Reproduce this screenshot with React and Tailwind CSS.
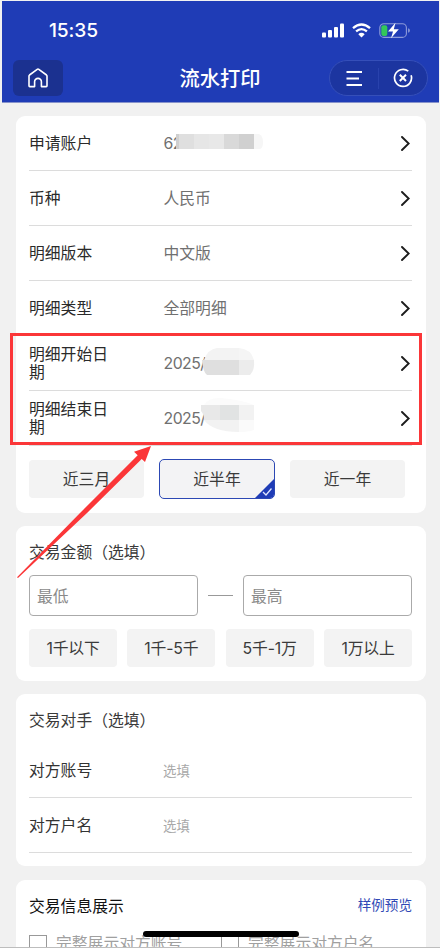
const ROWS = [
  { label: '申请账户', value: '62', mask: 'account' },
  { label: '币种', value: '人民币' },
  { label: '明细版本', value: '中文版' },
  { label: '明细类型', value: '全部明细' },
  { label: '明细开始日期', value: '2025/', mask: 'start' },
  { label: '明细结束日期', value: '2025/', mask: 'end' },
];

const PERIODS = ['近三月', '近半年', '近一年'];
const AMOUNTS = ['1千以下', '1千-5千', '5千-1万', '1万以上'];

// Mosaic blocks that hide the private part of a value
function Mask({ type }) {
  if (type === 'account') {
    return (
      <svg className="absolute left-[13px] top-[-2px]" width="88" height="18" viewBox="0 0 88 18">
        <rect x="0" y="1" width="3" height="15" fill="#cfcfcf" />
        <rect x="3" y="1" width="15" height="15" fill="#dfdfdf" />
        <rect x="18" y="1" width="15" height="15" fill="#e6e6e6" />
        <rect x="33" y="1" width="15" height="15" fill="#e8e8e8" />
        <rect x="48" y="1" width="15" height="15" fill="#d9d9d9" />
        <rect x="63" y="1" width="15" height="15" fill="#d0d0d0" />
        <path d="M78 1h5q4 2 4 8t-3 7h-6z" fill="#f6f6f6" />
      </svg>
    );
  }
  if (type === 'start') {
    return (
      <svg className="absolute left-[39px] top-[-7px]" width="53" height="28" viewBox="0 0 53 28">
        <path d="M2 12Q6 1 15 0H37V12z" fill="#f3f3f3" />
        <path d="M37 0Q49 1 52 12H37z" fill="#f5f5f5" />
        <path d="M0 12H37V27H5Q1 24 0 12z" fill="#dfdfdf" />
        <path d="M37 12H52Q53 22 48 27H37z" fill="#ececec" />
      </svg>
    );
  }
  return (
    <svg className="absolute left-[38px] top-[-13px]" width="54" height="36" viewBox="0 0 54 36">
      <path d="M3 8Q8 0 20 1Q42 3 53 8z" fill="#fbfbfb" />
      <path d="M0 8H19V23H3Q3 17 0 14z" fill="#e8e8e8" />
      <rect x="19" y="8" width="19" height="15" fill="#e1e3e3" />
      <rect x="38" y="8" width="15" height="15" fill="#f2f2f2" />
      <path d="M3 23H38V35Q12 35 3 23z" fill="#f2f2f2" />
      <path d="M38 23H53V33Q47 35 38 35z" fill="#fafafa" />
    </svg>
  );
}

function Chevron() {
  return (
    <svg className="mr-[2px]" width="9" height="15" viewBox="0 0 9 15" fill="none" stroke="#1c1c1c" strokeWidth="1.9">
      <path d="M1 1l6.700 6.500L1 14" strokeLinecap="round" />
    </svg>
  );
}

function Card({ className, children }) {
  return <section className={`rounded-[9px] bg-white pl-[13px] pr-[14px] ${className}`}>{children}</section>;
}

function StatusBar() {
  return (
    <div className="flex h-[58px] items-center pl-[47px] pr-[28px]">
      <span className="pt-[1px] font-[Inter] text-[19.200px] font-medium tracking-[-0.100px]">15:35</span>
      <div className="ml-auto flex items-center">
        <svg width="23" height="15" viewBox="0 0 23 15" fill="#fff">
          <rect x="0" y="9.500" width="4" height="5" rx="1" />
          <rect x="6" y="7" width="4" height="7.500" rx="1" />
          <rect x="12" y="4" width="4" height="10.500" rx="1" />
          <rect x="18" y="0.500" width="4" height="14" rx="1" />
        </svg>
        <svg className="ml-[7px]" width="19" height="15" viewBox="0 0 19 15" fill="none" stroke="#fff" strokeWidth="2.300">
          <path d="M1 5.200Q9.500-2.200 18 5.200" />
          <path d="M4.100 8.400Q9.500 3.800 14.900 8.400" />
          <path d="M6.300 11.200Q9.500 8.400 12.700 11.200L9.500 14.500z" fill="#fff" stroke="none" />
        </svg>
        <svg className="ml-[8px]" width="32" height="17" viewBox="0 0 32 17">
          <rect x="0.800" y="1.800" width="26.600" height="13.600" rx="4" fill="none" stroke="#8e9bd9" strokeWidth="1.100" />
          <path d="M29 6.200q2 .5 2 2.300t-2 2.300z" fill="#8090d4" />
          <rect x="2.300" y="3.300" width="6" height="10.600" rx="2" fill="#33c759" />
          <path d="M16.500.8L9 9.400h5L12 16.200l7.800-9h-5z" fill="#fff" />
        </svg>
      </div>
    </div>
  );
}

function NavBar() {
  return (
    <div className="flex h-[43px] items-start justify-between px-[11px] pt-[1px]">
      <button className="flex h-9 w-[50px] items-center justify-center rounded-md bg-[#1b3190]">
        <svg width="20" height="20" viewBox="0 0 20 20" fill="none" stroke="#fff" strokeWidth="1.600" strokeLinejoin="round">
          <path d="M4 18.600H1.800q-.8 0-.8-.8V8q0-.6.5-1L9.200 1.300q.8-.6 1.600 0L18.500 7q.5.4.5 1v9.800q0 .8-.8.8H13.400V13.800a3.400 3.400 0 0 0-6.800 0V18.600z" />
        </svg>
      </button>
      <h1 className="ml-[48px] mt-[4px] text-[20.300px] font-medium leading-[30px]">流水打印</h1>
      <div className="flex h-9 w-[99px] items-center rounded-full border border-[#354fb9] bg-[#1c35a0]">
        <div className="flex w-[49px] justify-center border-r border-[#2942ad] py-[3px]">
          <svg width="16" height="15" viewBox="0 0 16 15" fill="none" stroke="#fff" strokeWidth="1.800">
            <path d="M0.500 1H16M0.500 7.500H13M0.500 14H16" />
          </svg>
        </div>
        <div className="flex flex-1 justify-center">
          <svg width="20" height="20" viewBox="0 0 20 20" fill="none" stroke="#fff" strokeWidth="1.700">
            <path d="M15.300 3.200A8.500 8.500 0 1 0 18.100 7.200" />
            <path d="M6.800 6.800l6.200 6.200M13 6.800L6.800 13" strokeWidth="2" />
          </svg>
        </div>
      </div>
    </div>
  );
}

function Row({ label, value, mask }) {
  return (
    <div className="flex h-[55px] items-center border-b border-[#dcdcdc]">
      <div className="w-[134px] shrink-0 pt-[1px]">
        <div className="w-[84px] text-[15.800px] leading-[17.500px] text-[#2a2a2a]">{label}</div>
      </div>
      <div className="relative mt-[2px] pl-[0.500px] text-[15.800px] leading-[18px] text-[#707070]">
        <span className={mask ? 'tracking-[-0.500px]' : ''}>{value}</span>
        {mask && <Mask type={mask} />}
      </div>
      <div className="ml-auto">
        <Chevron />
      </div>
    </div>
  );
}

function Party({ label }) {
  return (
    <div className="flex h-[55px] items-center border-b border-[#dcdcdc] pt-[2px]">
      <span className="w-[134px] text-[15.800px] text-[#333]">{label}</span>
      <span className="text-[13.400px] text-[#a8a8a8]">选填</span>
    </div>
  );
}

function Period({ text, active }) {
  if (!active) {
    return (
      <button className="h-[38px] w-[115px] rounded-[4px] bg-[#f3f3f3] pt-[2px] text-[15.800px] text-[#3a3a3a]">{text}</button>
    );
  }
  return (
    <button className="relative h-[40px] w-[116px] overflow-hidden rounded-[5px] border border-[#2c48b4] bg-[#f3f3f5] pt-[2px] text-[15.800px] text-[#3a3a3a]">
      {text}
      <svg className="absolute -bottom-px -right-px" width="21" height="21" viewBox="0 0 21 21">
        <path d="M21 0V21H0z" fill="#1f3cb6" />
        <path d="M9 14l3 3 5.500-6.500" fill="none" stroke="#dfe5ff" strokeWidth="1.300" />
      </svg>
    </button>
  );
}

function AmountBox({ text }) {
  return (
    <div className="flex h-[41px] w-[169px] items-center rounded-[4px] border border-[#aaa] pl-[7px] pt-[2px] text-[15.800px] text-[#8a8a8a]">
      {text}
    </div>
  );
}

export default function App() {
  return (
    <div className="relative h-[948px] w-[440px] overflow-hidden border-b border-[#bdbdbd] bg-[#f1f1f1] font-['Inter','Noto_Sans_CJK_SC',sans-serif]">
      <header className="ml-[2px] mr-px mt-px h-[102px] border-b border-[#8793cb] bg-[#1f3cb6] text-white">
        <StatusBar />
        <NavBar />
      </header>

      <main className="flex flex-col gap-[13px] pl-4 pr-[14px] pt-[13px]">
        <Card className="h-[397px]">
          {ROWS.map((s) => (
            <Row key={s.label} {...s} />
          ))}
          <div className="mt-[13px] flex items-center justify-between pr-[7px]">
            {PERIODS.map((p) => (
              <Period key={p} text={p} active={p === '近半年'} />
            ))}
          </div>
        </Card>

        <Card className="h-[155px] pt-[15px]">
          <h2 className="text-[15.800px] leading-6 text-[#3a3a3a]">交易金额（选填）</h2>
          <div className="mt-[10px] flex items-center justify-between">
            <AmountBox text="最低" />
            <div className="h-px w-[25px] bg-[#999]" />
            <AmountBox text="最高" />
          </div>
          <div className="mt-[13px] flex justify-between">
            {AMOUNTS.map((a) => (
              <button key={a} className="h-[38px] w-[88px] rounded-[4px] bg-[#f3f3f3] pt-[1px] text-[15.800px] tracking-[-0.150px] text-[#3a3a3a]">{a}</button>
            ))}
          </div>
        </Card>

        <Card className="h-[172px] pt-[15px]">
          <h2 className="text-[15.800px] leading-6 text-[#3a3a3a]">交易对手（选填）</h2>
          <div className="mt-[10px]">
            <Party label="对方账号" />
            <Party label="对方户名" />
          </div>
        </Card>

        <Card className="mt-px h-[100px] pt-[15px]">
          <div className="flex items-center justify-between">
            <h2 className="text-[15.800px] leading-6 text-[#111]">交易信息展示</h2>
            <a className="-mt-[5px] text-[13.600px] leading-5 text-[#3049b5]">样例预览</a>
          </div>
          <div className="mt-[14px] flex text-[15.800px] leading-[22px] text-[#a0a0a0]">
            <div className="flex w-[192px] items-center">
              <span className="mr-[9px] size-[18px] border border-[#999]" />
              完整展示对方账号
            </div>
            <div className="flex items-center">
              <span className="mr-[9px] size-[18px] border border-[#999]" />
              完整展示对方户名
            </div>
          </div>
        </Card>
      </main>

      {/* Highlight box and arrow over the date rows */}
      <div className="absolute left-[10px] top-[333px] h-[112px] w-[412px] border-3 border-[#fb3638]" />
      <svg className="absolute left-0 top-[440px]" width="160" height="145" viewBox="0 440 160 145">
        <path d="M17 577.300L80 513L137.700 455.300L134 451.700L151 446L145 462L141.700 459L87 513L18 578z" fill="#fb3638" />
      </svg>
      {/* Home indicator */}
      <div className="absolute left-[143px] top-[931px] h-[6px] w-[156px] rounded-full bg-black" />
    </div>
  );
}
